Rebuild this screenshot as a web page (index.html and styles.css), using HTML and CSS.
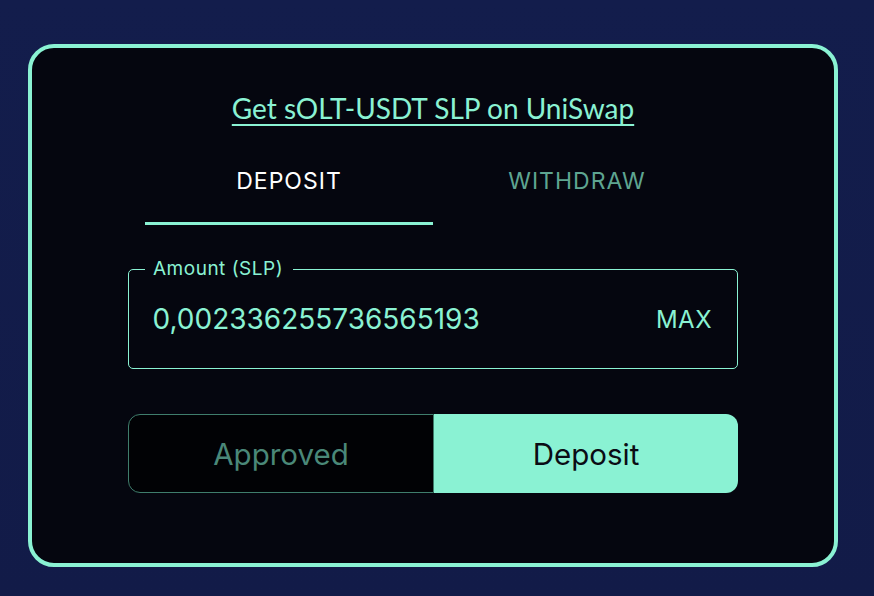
FILE: index.html
```html
<!DOCTYPE html>
<html lang="en">
<head>
  <meta charset="UTF-8">
  <meta name="viewport" content="width=device-width, initial-scale=1.0">
  <title>Deposit SLP</title>
  <link rel="stylesheet" href="styles.css">
</head>
<body>
  <div class="card">
    <!-- Link to get the LP token -->
    <a class="get-link" href="#">Get sOLT-USDT SLP on UniSwap</a>

    <!-- Tabs -->
    <div class="tabs">
      <div class="tab active">DEPOSIT</div>
      <div class="tab">WITHDRAW</div>
    </div>

    <!-- Amount input -->
    <div class="field">
      <span class="field-label">Amount (SLP)</span>
      <span class="field-value">0,002336255736565193</span>
      <span class="field-max">MAX</span>
    </div>

    <!-- Actions -->
    <div class="actions">
      <button class="btn btn-approved">Approved</button>
      <button class="btn btn-deposit">Deposit</button>
    </div>
  </div>
</body>
</html>
```

FILE: styles.css
```css
body {
  margin: 0;
  padding: 44px 0 0 28px;
  height: 596px;
  box-sizing: border-box;
  background: linear-gradient(180deg, #131d4c 0%, #121b48 100%);
  font-family: Inter, Roboto, "Liberation Sans", sans-serif;
  overflow: hidden;
}
.card {
  width: 810px;
  box-sizing: border-box;
  background: #05060f;
  border: 4px solid #8af2d3;
  border-radius: 26px;
  padding: 45px 0 70px;
  display: flex;
  flex-direction: column;
  align-items: center;
}
.get-link {
  font-family: Lato, "Open Sans", sans-serif;
  font-size: 28px;
  line-height: 30px;
  color: #8af2d3;
  text-decoration: underline;
  text-decoration-thickness: 2px;
  text-underline-offset: 5px;
}
.tabs {
  display: flex;
  margin-top: 28px;
  width: 576px;
}
.tab {
  flex: 1;
  text-align: center;
  font-size: 23px;
  letter-spacing: 1px;
  line-height: 24px;
  padding: 18px 0 29px;
  color: #5ea591;
  border-bottom: 3px solid transparent;
}
.tab.active {
  color: #ffffff;
  border-bottom-color: #8af2d3;
}
.field {
  position: relative;
  margin-top: 44px;
  width: 610px;
  height: 100px;
  box-sizing: border-box;
  border: 1.5px solid #8af2d3;
  border-radius: 5px;
  display: flex;
  align-items: center;
  justify-content: space-between;
  padding: 0 25px 0 23.5px;
  color: #8af2d3;
}
.field-label {
  position: absolute;
  top: -12px;
  left: 16px;
  padding: 0 10px 0 8px;
  background: #05060f;
  font-size: 19px;
  letter-spacing: 0.5px;
  line-height: 22px;
}
.field-value {
  font-size: 28px;
}
.field-max {
  font-size: 24px;
  letter-spacing: 0.5px;
}
.actions {
  display: flex;
  margin-top: 45px;
  width: 610px;
  height: 79px;
}
.btn {
  flex: 1;
  font-family: Inter, Roboto, "Liberation Sans", sans-serif;
  font-size: 29.5px;
  border: none;
  margin: 0;
  cursor: pointer;
}
.btn-approved {
  background: #010205;
  color: #4a8878;
  border: 1.5px solid #3f7d6c;
  border-radius: 12px 0 0 12px;
}
.btn-deposit {
  background: #8af2d3;
  color: #0a0c14;
  border-radius: 0 12px 12px 0;
}
```
